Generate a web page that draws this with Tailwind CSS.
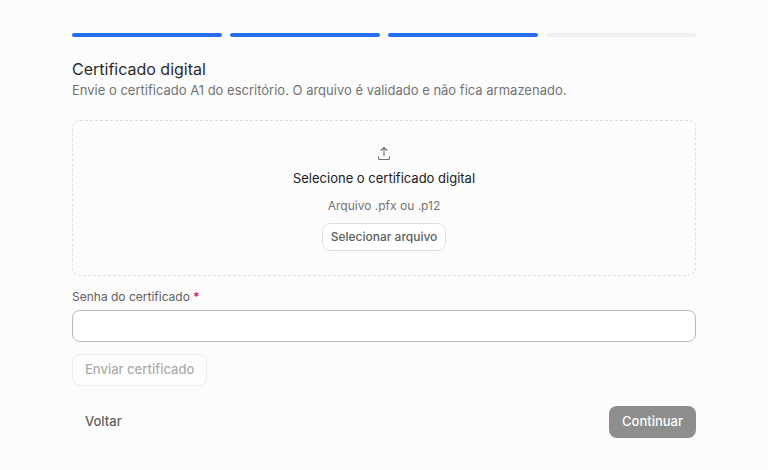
<!DOCTYPE html>
<html lang="pt-BR">
	<head>
		<meta charset="UTF-8" />
		<meta name="viewport" content="width=device-width, initial-scale=1.0" />
		<title>Certificado digital</title>
		<script src="https://cdn.jsdelivr.net/npm/@tailwindcss/browser@4"></script>
	</head>
	<body class="bg-[#fcfcfc] font-['Inter',sans-serif] text-[13px] text-[#2b2b2b]">
		<main class="mx-auto flex w-full max-w-2xl flex-col gap-5 px-6 pt-[33px] pb-8">
			<div class="flex gap-2">
				<div class="h-1 flex-1 rounded-full bg-[#266df0]"></div>
				<div class="h-1 flex-1 rounded-full bg-[#266df0]"></div>
				<div class="h-1 flex-1 rounded-full bg-[#266df0]"></div>
				<div class="h-1 flex-1 rounded-full bg-[#f0f0f0]"></div>
			</div>

			<header>
				<h1 class="text-base leading-6">Certificado digital</h1>
				<p class="leading-[19px] text-[#737373]">Envie o certificado A1 do escritório. O arquivo é validado e não fica armazenado.</p>
			</header>

			<form id="certForm" class="flex flex-col gap-3">
				<div class="flex flex-col items-center gap-2 rounded-lg border border-dashed border-[#dedede] p-6">
					<svg class="size-4 text-[#737373]" viewBox="0 0 16 16" fill="none" stroke="currentColor" stroke-width="1.1" stroke-linecap="round" stroke-linejoin="round" aria-hidden="true">
						<path d="M8 10.5V2.6M5 5.5l3-3 3 3M2.5 11.5v1.7a1.3 1.3 0 0 0 1.3 1.3h8.4a1.3 1.3 0 0 0 1.3-1.3v-1.7" />
					</svg>
					<p class="leading-[19px] text-[#202020]">Selecione o certificado digital</p>
					<p class="text-xs leading-[19px] text-[#737373]">Arquivo .pfx ou .p12</p>
					<button type="button" id="selectBtn" class="h-7 rounded-lg border border-[#dedede] bg-white px-2 text-xs font-medium text-[#606060]">Selecionar arquivo</button>
					<input type="file" id="certFile" accept=".pfx,.p12" aria-label="Certificado digital" class="hidden" />
				</div>
				<div class="flex flex-col gap-1">
					<label for="password" class="text-xs leading-[18px] text-[#606060]">Senha do certificado <span class="font-medium text-[#c4183c]">*</span></label>
					<input type="password" id="password" required class="h-8 w-full rounded-lg border border-[#bbbbbb] bg-white px-3" />
				</div>
				<button type="submit" id="sendBtn" disabled class="h-8 self-start rounded-lg border border-[#dedede] bg-white px-3 font-medium text-[#606060] opacity-50">Enviar certificado</button>
			</form>

			<footer class="flex items-center justify-between">
				<button type="button" class="h-8 rounded-lg border border-transparent px-3 font-medium text-[#606060]">Voltar</button>
				<button type="button" disabled class="h-8 rounded-lg border border-transparent bg-[#8e8e8e] px-3 font-medium text-[#fcfcfc]">Continuar</button>
			</footer>
		</main>
	</body>
</html>
<script>
	const fileInput = document.getElementById("certFile")
	const password = document.getElementById("password")
	const sendBtn = document.getElementById("sendBtn")

	const updateSend = () => {
		sendBtn.disabled = !fileInput.files.length || !password.value
	}

	document.getElementById("selectBtn").addEventListener("click", () => fileInput.click())
	fileInput.addEventListener("change", updateSend)
	password.addEventListener("input", updateSend)
</script>
